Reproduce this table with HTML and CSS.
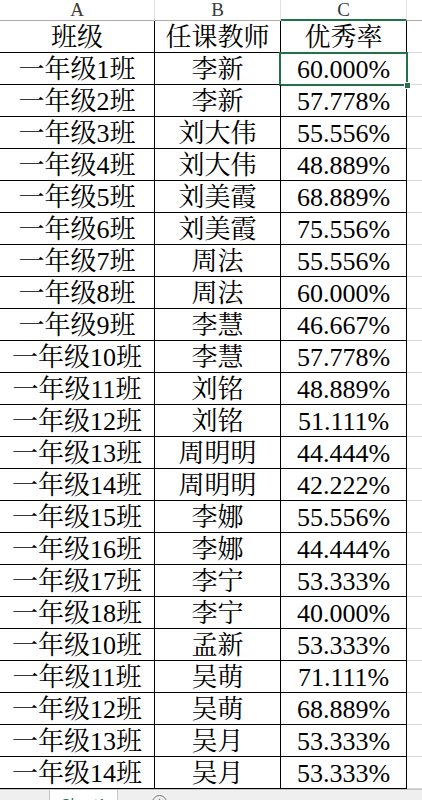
FILE: index.html
```html
<!DOCTYPE html>
<html lang="zh">
<head>
<meta charset="utf-8">
<title>Sheet1</title>
<link rel="stylesheet" href="styles.css">
</head>
<body>
<div class="sheet">
  <div class="colhead">A</div>
  <div class="colhead">B</div>
  <div class="colhead active">C</div>
  <div class="colhead extra"></div>

  <div class="cell">班级</div><div class="cell">任课教师</div><div class="cell">优秀率</div><div class="cell extra"></div>
  <div class="cell">一年级1班</div><div class="cell">李新</div><div class="cell num selected">60.000%<span class="handle"></span></div><div class="cell extra"></div>
  <div class="cell">一年级2班</div><div class="cell">李新</div><div class="cell num">57.778%</div><div class="cell extra"></div>
  <div class="cell">一年级3班</div><div class="cell">刘大伟</div><div class="cell num">55.556%</div><div class="cell extra"></div>
  <div class="cell">一年级4班</div><div class="cell">刘大伟</div><div class="cell num">48.889%</div><div class="cell extra"></div>
  <div class="cell">一年级5班</div><div class="cell">刘美霞</div><div class="cell num">68.889%</div><div class="cell extra"></div>
  <div class="cell">一年级6班</div><div class="cell">刘美霞</div><div class="cell num">75.556%</div><div class="cell extra"></div>
  <div class="cell">一年级7班</div><div class="cell">周法</div><div class="cell num">55.556%</div><div class="cell extra"></div>
  <div class="cell">一年级8班</div><div class="cell">周法</div><div class="cell num">60.000%</div><div class="cell extra"></div>
  <div class="cell">一年级9班</div><div class="cell">李慧</div><div class="cell num">46.667%</div><div class="cell extra"></div>
  <div class="cell">一年级10班</div><div class="cell">李慧</div><div class="cell num">57.778%</div><div class="cell extra"></div>
  <div class="cell">一年级11班</div><div class="cell">刘铭</div><div class="cell num">48.889%</div><div class="cell extra"></div>
  <div class="cell">一年级12班</div><div class="cell">刘铭</div><div class="cell num">51.111%</div><div class="cell extra"></div>
  <div class="cell">一年级13班</div><div class="cell">周明明</div><div class="cell num">44.444%</div><div class="cell extra"></div>
  <div class="cell">一年级14班</div><div class="cell">周明明</div><div class="cell num">42.222%</div><div class="cell extra"></div>
  <div class="cell">一年级15班</div><div class="cell">李娜</div><div class="cell num">55.556%</div><div class="cell extra"></div>
  <div class="cell">一年级16班</div><div class="cell">李娜</div><div class="cell num">44.444%</div><div class="cell extra"></div>
  <div class="cell">一年级17班</div><div class="cell">李宁</div><div class="cell num">53.333%</div><div class="cell extra"></div>
  <div class="cell">一年级18班</div><div class="cell">李宁</div><div class="cell num">40.000%</div><div class="cell extra"></div>
  <div class="cell">一年级10班</div><div class="cell">孟新</div><div class="cell num">53.333%</div><div class="cell extra"></div>
  <div class="cell">一年级11班</div><div class="cell">吴萌</div><div class="cell num">71.111%</div><div class="cell extra"></div>
  <div class="cell">一年级12班</div><div class="cell">吴萌</div><div class="cell num">68.889%</div><div class="cell extra"></div>
  <div class="cell">一年级13班</div><div class="cell">吴月</div><div class="cell num">53.333%</div><div class="cell extra"></div>
  <div class="cell">一年级14班</div><div class="cell">吴月</div><div class="cell num">53.333%</div><div class="cell extra"></div>
</div>
<div class="tabbar">
  <div class="tab-spacer"></div>
  <div class="tab">Sheet1</div>
  <div class="addsheet"><span class="plus">+</span></div>
</div>
</body>
</html>
```

FILE: styles.css
```css
html, body {
  margin: 0;
  padding: 0;
  background: #ffffff;
}
body {
  width: 422px;
  height: 800px;
  overflow: hidden;
  font-family: "Liberation Serif", "Noto Serif CJK SC", "Noto Sans CJK SC", serif;
  color: #000;
}
.sheet {
  display: grid;
  grid-template-columns: 155px 126px 126px 15px;
  grid-auto-rows: 32px;
  grid-template-rows: 21px;
}
.colhead {
  border-bottom: 1px solid #ababab;
  border-right: 1px solid #e1e1e1;
  font-size: 19px;
  line-height: 20px;
  text-align: center;
  color: #3a3a3a;
}
.colhead.active {
  border-bottom: 2px solid #217346;
  line-height: 19px;
}
.colhead.extra {
  border-right: none;
}
.cell {
  position: relative;
  border-right: 1px solid #000;
  border-bottom: 1px solid #000;
  font-size: 26px;
  line-height: 31px;
  padding-top: 1px;
  text-align: center;
  white-space: nowrap;
  box-sizing: border-box;
}
.cell.extra {
  border-right: none;
  border-bottom-color: #dadada;
}
.selected::after {
  content: "";
  position: absolute;
  left: -2px;
  top: -1px;
  right: -2px;
  bottom: -2px;
  border: 2px solid #217346;
  pointer-events: none;
}
.handle {
  position: absolute;
  right: -5px;
  bottom: -5px;
  width: 5px;
  height: 5px;
  background: #217346;
  border: 1px solid #fff;
  z-index: 2;
}
.tabbar {
  display: flex;
  height: 11px;
  border-top: 1px solid #c6c6c6;
  background: #efefef;
}
.tab-spacer {
  width: 49px;
  border-right: 1px solid #c6c6c6;
}
.tab {
  width: 67px;
  background: #fff;
  border-right: 1px solid #c6c6c6;
  font-family: "Liberation Sans", sans-serif;
  font-size: 14px;
  line-height: 20px;
  padding-top: 4px;
  text-align: center;
  color: #217346;
}
.addsheet {
  margin-left: 34px;
  margin-top: 5px;
  width: 13px;
  height: 13px;
  border: 1px solid #777;
  border-radius: 50%;
  font-family: "Liberation Sans", sans-serif;
  font-size: 12px;
  line-height: 13px;
  text-align: center;
  color: #555;
}
```
